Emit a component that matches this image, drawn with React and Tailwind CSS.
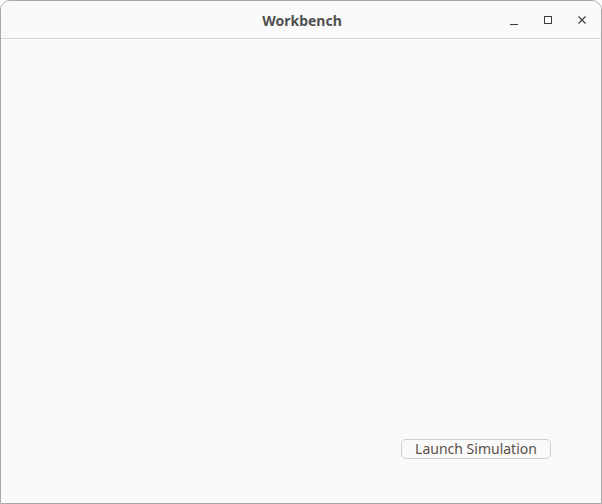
export default function App() {
    return (
        <div className="w-[602px] h-[504px] bg-white" style={{ fontFamily: '"Noto Sans", "DejaVu Sans", sans-serif' }}>
            <div className="w-full h-full flex flex-col bg-[#fafafa] border border-[#a8a8a8] rounded-t-[10px] overflow-hidden">
                {/* Barre de titre */}
                <div className="h-[38px] shrink-0 flex items-center relative border-b border-[#d6d6d6] bg-[#fafafa]">
                    <div className="flex-1 text-center text-[14px] font-bold text-[#505050] pl-[2px] pt-[2px]">Workbench</div>
                    <div className="absolute right-[9px] top-0 h-full flex items-center gap-[14px]">
                        <button className="w-[20px] h-[20px] flex items-center justify-center ml-[3px]">
                            <svg width="12" height="12" viewBox="0 0 12 12">
                                <path d="M2 10.5h8" stroke="#3d3d3d" strokeWidth="1" />
                            </svg>
                        </button>
                        <button className="w-[20px] h-[20px] flex items-center justify-center">
                            <svg width="12" height="12" viewBox="0 0 12 12">
                                <rect x="2.5" y="2.5" width="7" height="7" fill="none" stroke="#3d3d3d" strokeWidth="1" />
                            </svg>
                        </button>
                        <button className="w-[20px] h-[20px] flex items-center justify-center">
                            <svg width="12" height="12" viewBox="0 0 12 12">
                                <path d="M2.5 2.5l7 7M9.5 2.5l-7 7" stroke="#3d3d3d" strokeWidth="1.2" />
                            </svg>
                        </button>
                    </div>
                </div>

                {/* Zone principale */}
                <div className="flex-1 flex flex-col justify-end items-end pr-[50px] pb-[44px]">
                    <button className="h-[20px] w-[150px] rounded-[5px] border border-[#cdcdcd] bg-[#fafafa] text-[14px] leading-none text-[#5a5048] flex items-center justify-center">
                        Launch Simulation
                    </button>
                </div>
            </div>
        </div>
    );
}
